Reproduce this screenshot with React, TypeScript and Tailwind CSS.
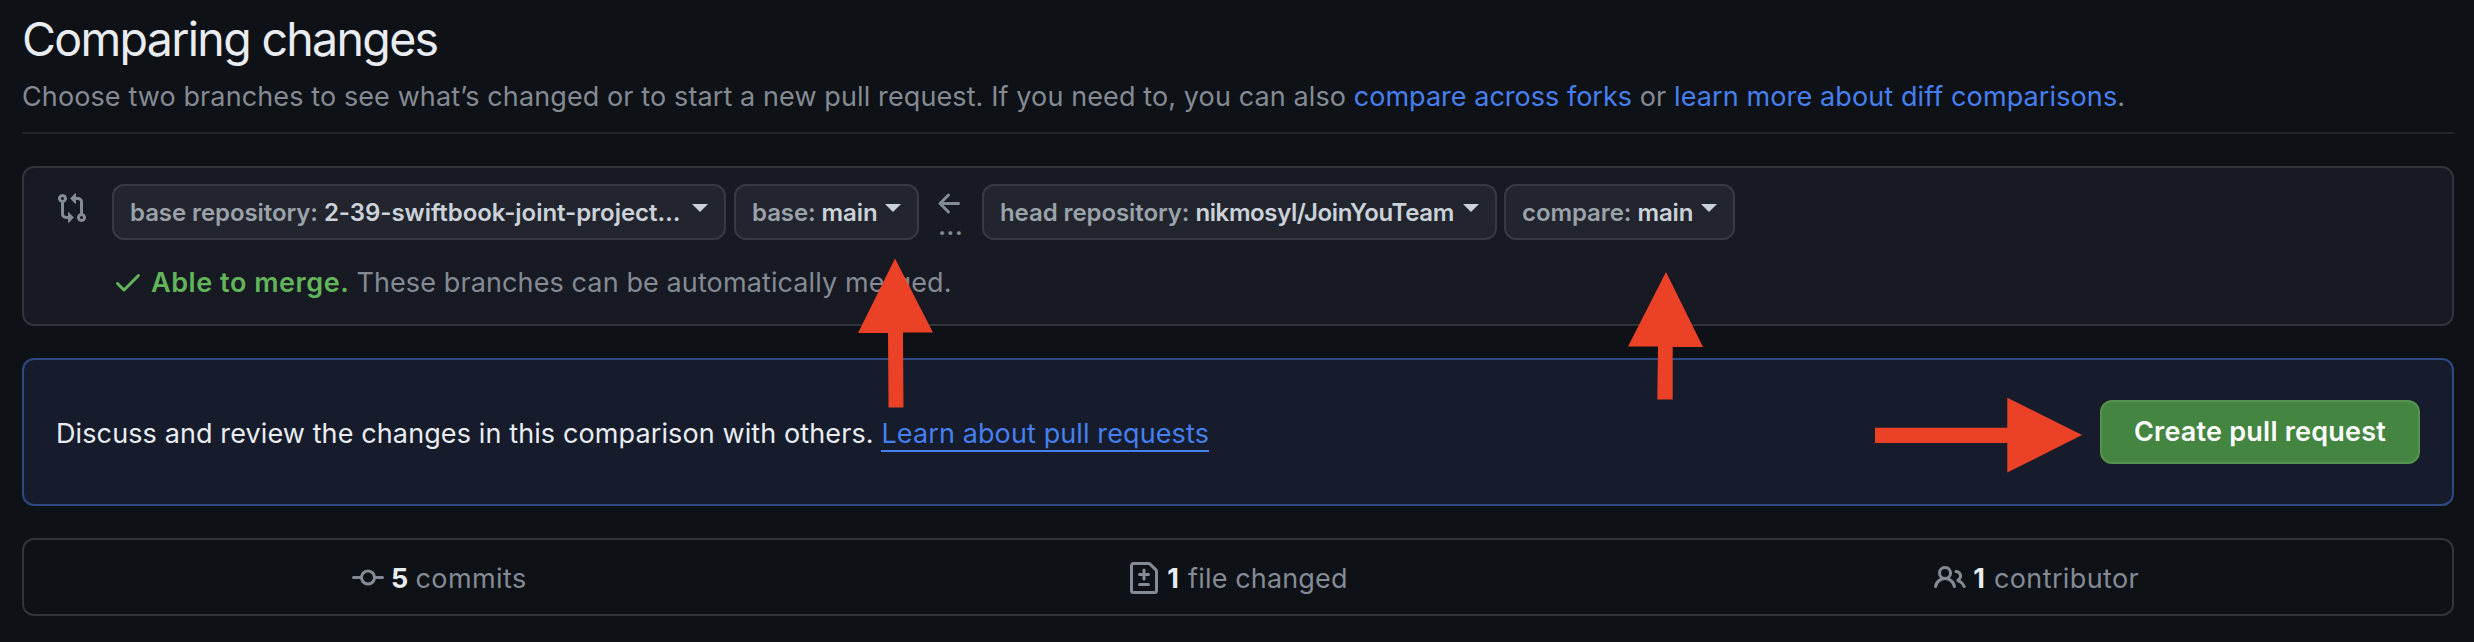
import type { ReactNode } from "react";

const icons = {
  compare:
    "M9.573.677A.25.25 0 0 1 10 .854V2.5h1A2.5 2.5 0 0 1 13.5 5v5.628a2.251 2.251 0 1 1-1.5 0V5a1 1 0 0 0-1-1h-1v1.646a.25.25 0 0 1-.427.177L7.177 3.427a.25.25 0 0 1 0-.354ZM6 12v-1.646a.25.25 0 0 1 .427-.177l2.396 2.396a.25.25 0 0 1 0 .354l-2.396 2.396A.25.25 0 0 1 6 15.146V13.5H5A2.5 2.5 0 0 1 2.5 11V5.372a2.25 2.25 0 1 1 1.5 0V11a1 1 0 0 0 1 1ZM4 3.25a.75.75 0 1 0-1.5 0 .75.75 0 0 0 1.5 0ZM12.75 12a.75.75 0 1 0 0 1.5.75.75 0 0 0 0-1.5Z",
  arrowLeft:
    "M7.78 12.53a.75.75 0 0 1-1.06 0L2.47 8.28a.75.75 0 0 1 0-1.06l4.25-4.25a.751.751 0 0 1 1.042.018.751.751 0 0 1 .018 1.042L4.81 7h7.44a.75.75 0 0 1 0 1.5H4.81l2.97 2.97a.75.75 0 0 1 0 1.06Z",
  check:
    "M13.78 4.22a.75.75 0 0 1 0 1.06l-7.25 7.25a.75.75 0 0 1-1.06 0L2.22 9.28a.751.751 0 0 1 .018-1.042.751.751 0 0 1 1.042-.018L6 10.94l6.72-6.72a.75.75 0 0 1 1.06 0Z",
  commit:
    "M11.93 8.5a4.002 4.002 0 0 1-7.86 0H.75a.75.75 0 0 1 0-1.5h3.32a4.002 4.002 0 0 1 7.86 0h3.32a.75.75 0 0 1 0 1.5Zm-1.43-.75a2.5 2.5 0 1 0-5 0 2.5 2.5 0 0 0 5 0Z",
  fileDiff:
    "M1 1.75C1 .784 1.784 0 2.75 0h7.586c.464 0 .909.184 1.237.513l2.914 2.914c.329.328.513.773.513 1.237v9.586A1.75 1.75 0 0 1 13.25 16H2.75A1.75 1.75 0 0 1 1 14.25Zm1.75-.25a.25.25 0 0 0-.25.25v12.5c0 .138.112.25.25.25h10.5a.25.25 0 0 0 .25-.25V4.664a.25.25 0 0 0-.073-.177l-2.914-2.914a.25.25 0 0 0-.177-.073ZM8 3.25a.75.75 0 0 1 .75.75v1.5h1.5a.75.75 0 0 1 0 1.5h-1.5v1.5a.75.75 0 0 1-1.5 0V7h-1.5a.75.75 0 0 1 0-1.5h1.5V4A.75.75 0 0 1 8 3.25Zm-3 8a.75.75 0 0 1 .75-.75h4.5a.75.75 0 0 1 0 1.5h-4.5a.75.75 0 0 1-.75-.75Z",
  people:
    "M5.5 3.5a2 2 0 1 0 0 4 2 2 0 0 0 0-4ZM2 5.5a3.5 3.5 0 1 1 5.898 2.549 5.507 5.507 0 0 1 3.034 4.084.75.75 0 1 1-1.482.235 4.001 4.001 0 0 0-7.9 0 .75.75 0 0 1-1.482-.236A5.507 5.507 0 0 1 3.102 8.05 3.49 3.49 0 0 1 2 5.5ZM11 4a.75.75 0 1 0 0 1.5 1.5 1.5 0 0 1 .666 2.844.75.75 0 0 0-.416.672v.352a.75.75 0 0 0 .574.73c1.2.289 2.162 1.2 2.522 2.372a.75.75 0 1 0 1.434-.44 5.01 5.01 0 0 0-2.56-3.012A3 3 0 0 0 11 4Z",
};

function Icon({ name, className = "" }: { name: keyof typeof icons; className?: string }) {
  return (
    <svg viewBox="0 0 16 16" className={`size-8 shrink-0 fill-current ${className}`} aria-hidden="true">
      <path d={icons[name]} />
    </svg>
  );
}

function Selector({ label, value, className }: { label: string; value: ReactNode; className: string }) {
  return (
    <button
      className={`flex h-14 shrink-0 items-center rounded-xl border-2 border-[#363a42] bg-[#22252d] pl-4 text-2xl font-semibold tracking-[-0.08px] whitespace-pre ${className}`}
    >
      <span className="pt-0.5 text-[#9aa2aa]">{label} </span>
      <span className="flex-1 pt-0.5 text-left text-[#cbd2da]">{value}</span>
      <svg viewBox="0 0 16 8" className="mr-4 mb-2 h-2 w-4 fill-[#c9d1d9]" aria-hidden="true">
        <path d="M0 0h16L8 8z" />
      </svg>
    </button>
  );
}

function Stat({ icon, count, label, className }: { icon: keyof typeof icons; count: number; label: string; className: string }) {
  return (
    <li className="flex flex-1 items-center justify-center text-[#848b94]">
      <Icon name={icon} className="mt-0.5" />
      <span className="mt-1 ml-[7px] font-bold text-[#e9edf2]">{count}</span>
      <span className={`mt-1 ${className}`}>{label}</span>
    </li>
  );
}

export default function App() {
  return (
    <main className="relative h-[642px] w-[2474px] overflow-hidden bg-[#0e1116] pr-5 pl-[22px] font-['Inter',sans-serif] text-[27px] leading-[42px] tracking-[0.11px] text-[#e9edf2]">
      <header className="flex h-[134px] flex-col border-b-2 border-[#21252b] pt-[9px]">
        <h1 className="text-[46.5px] leading-[60px] tracking-[-1.68px]">Comparing changes</h1>
        <p className="mt-[7px] tracking-[0.108px] text-[#848b94]">
          Choose two branches to see what’s changed or to start a new pull request. If you need to, you can also{" "}
          <a className="tracking-[0.02px] text-[#4680f0]">compare across forks</a> or{" "}
          <a className="text-[#4680f0]">learn more about diff comparisons</a>.
        </p>
      </header>

      <section className="mt-8 flex h-40 rounded-xl border-2 border-[#30343b] bg-[#171a22] pt-4 pl-8 text-[#848b94]">
        <Icon name="compare" className="mt-2" />
        <div className="ml-6">
          <div className="flex">
            <Selector
              label="base repository:"
              value={<span className="tracking-[-0.04px]">2-39-swiftbook-joint-project…</span>}
              className="w-[614px]"
            />
            <Selector label="base:" value="main" className="ml-2 w-[185px]" />
            <div className="flex w-[63px] flex-col items-center pt-1 pr-1">
              <Icon name="arrowLeft" className="ml-[3px]" />
              <span className="-mt-1 ml-1 text-[27px] leading-5 font-medium tracking-[0.2px]">...</span>
            </div>
            <Selector
              label="head repository:"
              value={<span className="tracking-[-0.38px]">nikmosyl/JoinYouTeam</span>}
              className="w-[515px]"
            />
            <Selector label="compare:" value="main" className="ml-[7px] w-[231px]" />
          </div>
          <p className="mt-[21px] flex h-[42px] items-center">
            <Icon name="check" className="text-[#62b55a]" />
            <strong className="ml-[7px] pt-px font-semibold tracking-[0.55px] text-[#62b55a]">Able to merge.</strong>
            <span className="ml-[7px] pt-px tracking-[0.11px]">These branches can be automatically merged.</span>
          </p>
        </div>
      </section>

      <section className="mt-8 flex h-[148px] items-center justify-between rounded-xl border-2 border-[#2d4a85] bg-[#161c2b] pr-8 pl-8">
        <p className="pt-[3px]">
          Discuss and review the changes in this comparison with others.{" "}
          <a className="border-b-2 border-[#4680f0] text-[#4680f0]">Learn about pull requests</a>
        </p>
        <button className="h-16 w-80 rounded-xl border-2 border-[#56934f] bg-[#448541] font-semibold tracking-[0.22px] text-white">
          Create pull request
        </button>
      </section>

      <ul className="mt-8 flex h-[78px] rounded-xl border-2 border-[#30343b] px-4">
        <Stat icon="commit" count={5} label="commits" className="ml-[7px] tracking-[0.4px]" />
        <Stat icon="fileDiff" count={1} label="file changed" className="ml-[9px] tracking-[0.15px]" />
        <Stat icon="people" count={1} label="contributor" className="ml-[9px] tracking-[0.38px]" />
      </ul>

      <svg viewBox="0 0 2474 642" className="pointer-events-none absolute inset-0 h-[642px] w-[2474px] fill-[#ea4127]" aria-hidden="true">
        <path d="M895 258.500L933 332.500H903L903.500 407.500H888.500L888 333H858Z" />
        <path d="M1666 272L1703 347H1672.700V399.500H1657.300L1658 346.500H1628Z" />
        <path d="M1875 427.700H2007.300V397.800L2082 435L2007.300 472.600V443H1875Z" />
      </svg>
    </main>
  );
}
